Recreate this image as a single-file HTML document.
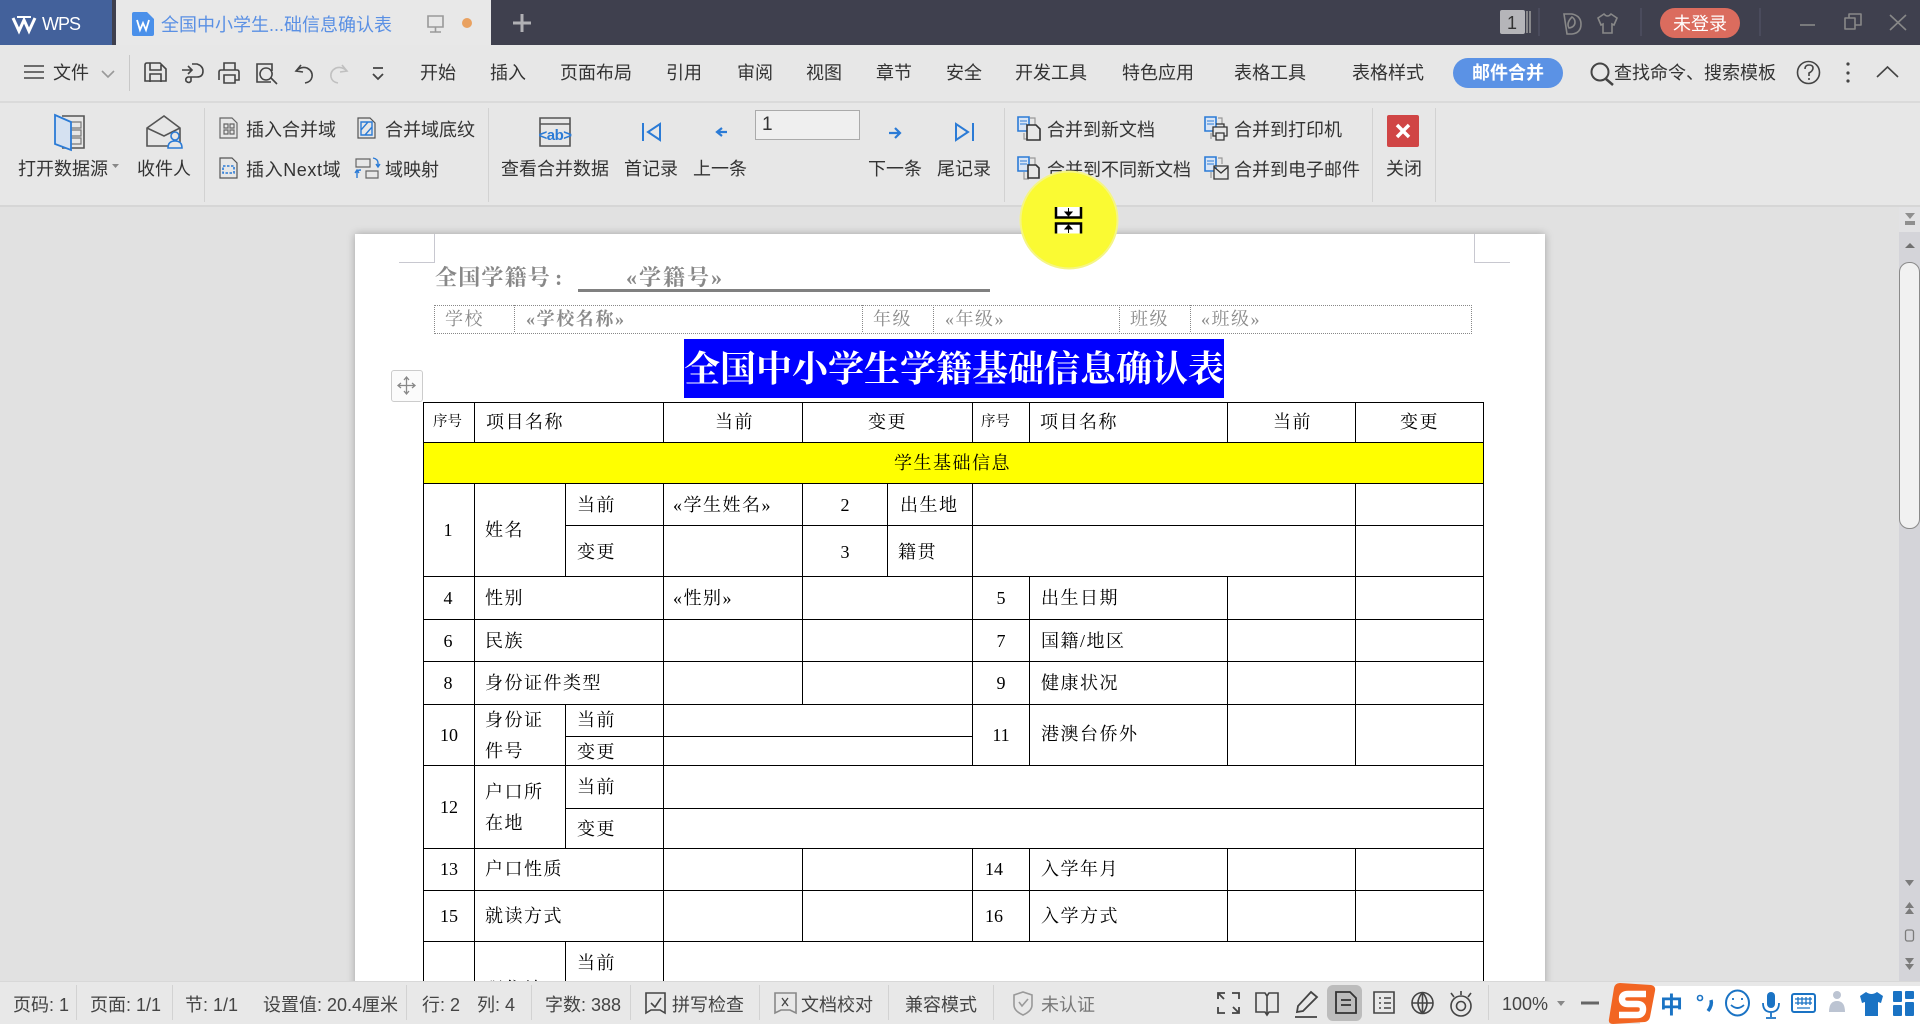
<!DOCTYPE html>
<html lang="zh"><head><meta charset="utf-8"><title>WPS</title>
<style>
html,body{margin:0;padding:0;width:1920px;height:1024px;overflow:hidden;background:#e1e1e1}
#r{position:relative;width:1920px;height:1024px;overflow:hidden;font-family:"Liberation Sans","Noto Sans CJK SC",sans-serif;color:#333}
.b{position:absolute}
.t{position:absolute;white-space:nowrap;line-height:0;height:0;font-size:18px}
.f{font-family:"Liberation Serif","Noto Serif CJK SC",serif;font-size:18px;letter-spacing:1.5px;color:#000;margin-top:1px;margin-left:-1px}
.n{font-family:"Liberation Serif",serif;font-size:18px;color:#000;transform:translateX(-50%)}
.g{font-family:"Liberation Serif","Noto Serif CJK SC",serif;font-size:18px;letter-spacing:1.5px;color:#8a8a8a;margin-top:1px}
.h{position:absolute;height:1px;background:#000}
.v{position:absolute;width:1px;background:#000}
.d{position:absolute;width:0;border-left:1px dotted #888;top:305px;height:27px}
.s{position:absolute;width:1px;background:#d2d2d2}
.st{color:#444;font-size:18px;margin-top:1px}
.k{margin-top:1px}
</style></head><body><div id="r">

<!-- page -->
<div class="b" style="left:355px;top:234px;width:1190px;height:790px;background:#fff;box-shadow:0 0 8px rgba(0,0,0,.28)"></div>
<div class="b" style="left:434px;top:234px;width:1px;height:29px;background:#c8c8d0"></div>
<div class="b" style="left:399px;top:262px;width:36px;height:1px;background:#c8c8d0"></div>
<div class="b" style="left:1474px;top:234px;width:1px;height:29px;background:#c8c8d0"></div>
<div class="b" style="left:1474px;top:262px;width:36px;height:1px;background:#c8c8d0"></div>

<div class="t" style="left:435px;top:278px;font-family:'Liberation Serif','Noto Serif CJK SC',serif;font-size:22px;letter-spacing:1.2px;color:#888;font-weight:700">全国学籍号</div>
<div class="t" style="left:555px;top:278px;font-family:'Liberation Serif',serif;font-size:22px;color:#888;font-weight:700">:</div>
<div class="t" style="left:626px;top:278px;font-family:'Liberation Serif','Noto Serif CJK SC',serif;font-size:22px;letter-spacing:2px;color:#888;font-weight:700">«学籍号»</div>
<div class="b" style="left:578px;top:289px;width:412px;height:3px;background:#808080"></div>

<div class="b" style="left:434px;top:305px;width:1036px;height:27px;border:1px dotted #888"></div>
<div class="d" style="left:514px"></div><div class="d" style="left:862px"></div><div class="d" style="left:933px"></div><div class="d" style="left:1119px"></div><div class="d" style="left:1190px"></div>
<div class="t g" style="left:445px;top:318px">学校</div>
<div class="t g" style="left:526px;top:318px;font-weight:700;letter-spacing:1.600px">«学校名称»</div>
<div class="t g" style="left:873px;top:318px">年级</div>
<div class="t g" style="left:945px;top:318px">«年级»</div>
<div class="t g" style="left:1130px;top:318px">班级</div>
<div class="t g" style="left:1201px;top:318px">«班级»</div>

<div class="b" style="left:684px;top:339px;width:540px;height:59px;background:#00f"></div>
<div class="t" style="left:684px;top:369px;font-family:'Liberation Serif','Noto Serif CJK SC',serif;font-size:36px;font-weight:700;color:#fff">全国中小学生学籍基础信息确认表</div>

<div class="b" style="left:391px;top:370px;width:30px;height:30px;background:#fbfbfb;border:1px solid #ccc;border-radius:3px"></div>

<div class="b" style="left:424px;top:443px;width:1060px;height:40px;background:#ff0"></div>

<!-- table lines -->
<div class="h" style="left:423px;top:402px;width:1061px"></div>
<div class="h" style="left:423px;top:442px;width:1061px"></div>
<div class="h" style="left:423px;top:483px;width:1061px"></div>
<div class="h" style="left:565px;top:525px;width:919px"></div>
<div class="h" style="left:423px;top:576px;width:1061px"></div>
<div class="h" style="left:423px;top:619px;width:1061px"></div>
<div class="h" style="left:423px;top:661px;width:1061px"></div>
<div class="h" style="left:423px;top:704px;width:1061px"></div>
<div class="h" style="left:565px;top:736px;width:408px"></div>
<div class="h" style="left:423px;top:765px;width:1061px"></div>
<div class="h" style="left:565px;top:808px;width:919px"></div>
<div class="h" style="left:423px;top:848px;width:1061px"></div>
<div class="h" style="left:423px;top:890px;width:1061px"></div>
<div class="h" style="left:423px;top:941px;width:1061px"></div>
<div class="v" style="left:423px;top:402px;height:580px"></div>
<div class="v" style="left:1483px;top:402px;height:580px"></div>
<div class="v" style="left:474px;top:402px;height:40px"></div>
<div class="v" style="left:474px;top:483px;height:498px"></div>
<div class="v" style="left:663px;top:402px;height:40px"></div>
<div class="v" style="left:663px;top:483px;height:498px"></div>
<div class="v" style="left:565px;top:483px;height:93px"></div>
<div class="v" style="left:565px;top:704px;height:144px"></div>
<div class="v" style="left:565px;top:941px;height:40px"></div>
<div class="v" style="left:802px;top:402px;height:40px"></div>
<div class="v" style="left:802px;top:483px;height:221px"></div>
<div class="v" style="left:802px;top:848px;height:93px"></div>
<div class="v" style="left:887px;top:483px;height:93px"></div>
<div class="v" style="left:972px;top:402px;height:40px"></div>
<div class="v" style="left:972px;top:483px;height:282px"></div>
<div class="v" style="left:972px;top:848px;height:93px"></div>
<div class="v" style="left:1029px;top:402px;height:40px"></div>
<div class="v" style="left:1029px;top:576px;height:189px"></div>
<div class="v" style="left:1029px;top:848px;height:93px"></div>
<div class="v" style="left:1227px;top:402px;height:40px"></div>
<div class="v" style="left:1227px;top:576px;height:189px"></div>
<div class="v" style="left:1227px;top:848px;height:93px"></div>
<div class="v" style="left:1355px;top:402px;height:40px"></div>
<div class="v" style="left:1355px;top:483px;height:282px"></div>
<div class="v" style="left:1355px;top:848px;height:93px"></div>

<!-- table text -->
<div class="t f" style="left:434px;top:421px;font-size:14.500px;letter-spacing:0">序号</div>
<div class="t f" style="left:487px;top:421px">项目名称</div>
<div class="t f" style="left:716px;top:421px">当前</div>
<div class="t f" style="left:869px;top:421px">变更</div>
<div class="t f" style="left:982px;top:421px;font-size:14.500px;letter-spacing:0">序号</div>
<div class="t f" style="left:1041px;top:421px">项目名称</div>
<div class="t f" style="left:1274px;top:421px">当前</div>
<div class="t f" style="left:1401px;top:421px">变更</div>
<div class="t f" style="left:895px;top:462px">学生基础信息</div>

<div class="t n" style="left:448px;top:530px">1</div>
<div class="t f" style="left:486px;top:529px">姓名</div>
<div class="t f" style="left:578px;top:504px">当前</div>
<div class="t f" style="left:578px;top:551px">变更</div>
<div class="t f" style="left:674px;top:504px">«学生姓名»</div>
<div class="t n" style="left:845px;top:505px">2</div>
<div class="t n" style="left:845px;top:552px">3</div>
<div class="t f" style="left:901px;top:504px">出生地</div>
<div class="t f" style="left:899px;top:551px">籍贯</div>

<div class="t n" style="left:448px;top:598px">4</div>
<div class="t f" style="left:486px;top:597px">性别</div>
<div class="t f" style="left:674px;top:597px">«性别»</div>
<div class="t n" style="left:1001px;top:598px">5</div>
<div class="t f" style="left:1042px;top:597px">出生日期</div>

<div class="t n" style="left:448px;top:641px">6</div>
<div class="t f" style="left:486px;top:640px">民族</div>
<div class="t n" style="left:1001px;top:641px">7</div>
<div class="t f" style="left:1042px;top:640px">国籍/地区</div>

<div class="t n" style="left:448px;top:683px">8</div>
<div class="t f" style="left:486px;top:682px">身份证件类型</div>
<div class="t n" style="left:1001px;top:683px">9</div>
<div class="t f" style="left:1042px;top:682px">健康状况</div>

<div class="t n" style="left:449px;top:735px">10</div>
<div class="t f" style="left:486px;top:719px">身份证</div>
<div class="t f" style="left:486px;top:750px">件号</div>
<div class="t f" style="left:578px;top:719px">当前</div>
<div class="t f" style="left:578px;top:751px">变更</div>
<div class="t n" style="left:1001px;top:735px">11</div>
<div class="t f" style="left:1042px;top:733px">港澳台侨外</div>

<div class="t n" style="left:449px;top:807px">12</div>
<div class="t f" style="left:486px;top:791px">户口所</div>
<div class="t f" style="left:486px;top:822px">在地</div>
<div class="t f" style="left:578px;top:786px">当前</div>
<div class="t f" style="left:578px;top:828px">变更</div>

<div class="t n" style="left:449px;top:869px">13</div>
<div class="t f" style="left:486px;top:868px">户口性质</div>
<div class="t n" style="left:994px;top:869px">14</div>
<div class="t f" style="left:1042px;top:868px">入学年月</div>

<div class="t n" style="left:449px;top:916px">15</div>
<div class="t f" style="left:486px;top:915px">就读方式</div>
<div class="t n" style="left:994px;top:916px">16</div>
<div class="t f" style="left:1042px;top:915px">入学方式</div>

<div class="t f" style="left:578px;top:962px">当前</div>
<div class="t n" style="left:449px;top:990px">17</div>
<div class="t f" style="left:486px;top:988px">现住址</div>

<!-- right scrollbar -->
<div class="b" style="left:1899px;top:207px;width:21px;height:25px;background:#e2e2e4"></div>
<div class="b" style="left:1899px;top:232px;width:21px;height:750px;background:#d4d4d9"></div>
<div class="b" style="left:1899px;top:262px;width:19px;height:265px;background:#f1f1f1;border:1px solid #8a8a8a;border-radius:10px"></div>

<!-- title bar -->
<div class="b" style="left:0;top:0;width:1920px;height:45px;background:#3f404e"></div>
<div class="b" style="left:0;top:0;width:112px;height:45px;background:#43619b"></div>
<div class="b" style="left:116px;top:0;width:375px;height:45px;background:#e8e8e8"></div>
<div class="t" style="left:42px;top:24px;color:#fff;font-size:18px;letter-spacing:-1px">WPS</div>
<div class="t" style="left:161px;top:25px;color:#5a90e4;font-size:18px">全国中小学生...础信息确认表</div>
<div class="b" style="left:462px;top:18px;width:10px;height:10px;border-radius:50%;background:#e9a160"></div>
<div class="b" style="left:1500px;top:10px;width:25px;height:24px;background:#b5b5b9;border-radius:2px"></div>
<div class="t" style="left:1507px;top:23px;font-size:18px;color:#333">1</div>
<div class="b" style="left:1660px;top:8px;width:80px;height:30px;border-radius:15px;background:#db6c5e"></div>
<div class="t" style="left:1673px;top:24px;color:#fff;font-size:18px">未登录</div>

<!-- menu -->
<div class="b" style="left:0;top:45px;width:1920px;height:56px;background:#e7e7e7"></div>
<div class="b" style="left:0;top:101px;width:1920px;height:2px;background:#dadada"></div>
<div class="b" style="left:0;top:103px;width:1920px;height:102px;background:#e7e7e7"></div>
<div class="b" style="left:0;top:205px;width:1920px;height:2px;background:#d6d6d6"></div>
<div class="t" style="left:53px;top:73px">文件</div>
<div class="t" style="left:420px;top:73px">开始</div>
<div class="t" style="left:490px;top:73px">插入</div>
<div class="t" style="left:560px;top:73px">页面布局</div>
<div class="t" style="left:666px;top:73px">引用</div>
<div class="t" style="left:737px;top:73px">审阅</div>
<div class="t" style="left:806px;top:73px">视图</div>
<div class="t" style="left:876px;top:73px">章节</div>
<div class="t" style="left:946px;top:73px">安全</div>
<div class="t" style="left:1015px;top:73px">开发工具</div>
<div class="t" style="left:1122px;top:73px">特色应用</div>
<div class="t" style="left:1234px;top:73px">表格工具</div>
<div class="t" style="left:1352px;top:73px">表格样式</div>
<div class="b" style="left:1453px;top:58px;width:110px;height:30px;border-radius:15px;background:#5b92e5"></div>
<div class="t" style="left:1472px;top:73px;color:#fff;font-weight:700">邮件合并</div>
<div class="t" style="left:1614px;top:73px">查找命令、搜索模板</div>
<div class="s" style="left:129px;top:55px;height:36px;background:#c8c8c8"></div>

<!-- ribbon -->
<div class="s" style="left:204px;top:108px;height:94px"></div>
<div class="s" style="left:488px;top:108px;height:94px"></div>
<div class="s" style="left:1004px;top:108px;height:94px"></div>
<div class="s" style="left:1372px;top:108px;height:94px"></div>
<div class="s" style="left:1435px;top:108px;height:94px"></div>
<div class="t k" style="left:18px;top:168px">打开数据源</div>
<div class="t k" style="left:137px;top:168px">收件人</div>
<div class="t k" style="left:246px;top:129px">插入合并域</div>
<div class="t k" style="left:385px;top:129px">合并域底纹</div>
<div class="t k" style="left:246px;top:169px;letter-spacing:.6px">插入Next域</div>
<div class="t k" style="left:385px;top:169px">域映射</div>
<div class="t k" style="left:501px;top:168px">查看合并数据</div>
<div class="t k" style="left:624px;top:168px">首记录</div>
<div class="t k" style="left:693px;top:168px">上一条</div>
<div class="b" style="left:755px;top:110px;width:103px;height:28px;background:#efefef;border:1px solid #aaa"></div>
<div class="t" style="left:762px;top:125px;font-size:19px">1</div>
<div class="t k" style="left:868px;top:168px">下一条</div>
<div class="t k" style="left:937px;top:168px">尾记录</div>
<div class="t k" style="left:1047px;top:129px">合并到新文档</div>
<div class="t k" style="left:1047px;top:169px">合并到不同新文档</div>
<div class="t k" style="left:1234px;top:129px">合并到打印机</div>
<div class="t k" style="left:1234px;top:169px">合并到电子邮件</div>
<div class="t k" style="left:1386px;top:168px">关闭</div>

<!-- status bar -->
<div class="b" style="left:0;top:981px;width:1920px;height:43px;background:#e8e8e8;border-top:1px solid #d8d8d8;box-sizing:border-box"></div>
<div class="s" style="left:76px;top:985px;height:35px"></div>
<div class="s" style="left:172px;top:985px;height:35px"></div>
<div class="s" style="left:406px;top:985px;height:35px"></div>
<div class="s" style="left:531px;top:985px;height:35px"></div>
<div class="s" style="left:630px;top:985px;height:35px"></div>
<div class="s" style="left:759px;top:985px;height:35px"></div>
<div class="s" style="left:888px;top:985px;height:35px"></div>
<div class="s" style="left:993px;top:985px;height:35px"></div>
<div class="s" style="left:1488px;top:985px;height:35px"></div>
<div class="t st" style="left:13px;top:1004px">页码: 1</div>
<div class="t st" style="left:90px;top:1004px">页面: 1/1</div>
<div class="t st" style="left:185px;top:1004px">节: 1/1</div>
<div class="t st" style="left:263px;top:1004px">设置值: 20.4厘米</div>
<div class="t st" style="left:422px;top:1004px">行: 2</div>
<div class="t st" style="left:477px;top:1004px">列: 4</div>
<div class="t st" style="left:545px;top:1004px">字数: 388</div>
<div class="t st" style="left:672px;top:1004px">拼写检查</div>
<div class="t st" style="left:801px;top:1004px">文档校对</div>
<div class="t st" style="left:905px;top:1004px">兼容模式</div>
<div class="t st" style="left:1041px;top:1004px;color:#777">未认证</div>
<div class="b" style="left:1327px;top:985px;width:35px;height:36px;background:#bcbcbc;border-radius:6px"></div>
<div class="t st" style="left:1502px;top:1003px">100%</div>
<div class="b" style="left:1640px;top:986px;width:280px;height:38px;background:#fff"></div>
<div class="t" style="left:1660px;top:1005px;color:#1a73c4;font-size:23px;font-weight:700">中</div>

<!-- icons -->
<svg class="b" style="left:0;top:0" width="1920" height="1024" viewBox="0 0 1920 1024" fill="none" stroke="#444" stroke-width="1.6">
<!-- WPS logo -->
<path d="M13 18 L19 31 L24 20 L29 31 L35 18" stroke="#fff" stroke-width="3"/>
<path d="M17 17 H31" stroke="#fff" stroke-width="2"/>
<!-- doc icon -->
<path d="M132 14 q0-2 2-2 H147 L154 19 V34 q0 2-2 2 H134 q-2 0-2-2 Z" fill="#4a90ea" stroke="none"/>
<path d="M137 20 L140 30 L143 23 L146 30 L149 20" stroke="#fff" stroke-width="1.8"/>
<!-- monitor -->
<path d="M428 16 H443 V27 H428 Z M435.5 27 V32 M430 32 H441" stroke="#999"/>
<!-- plus -->
<path d="M522 14 V32 M513 23 H531" stroke="#b0b0b4" stroke-width="3"/>
<!-- title right -->
<path d="M1527 11 V33 M1530 11 V33" stroke="#999"/>
<path d="M1539 8 V36 M1641 8 V36 M1760 8 V36" stroke="#55566a" stroke-width="1"/>
<path d="M1564 14 H1572 q9 2 9 10 q0 9 -9 10 H1567 Z M1572 17 q-6 6 -3 11 q6 -1 6 -6 q0 -3 -3 -5 Z" stroke="#888"/>
<path d="M1604 14 L1598 18 L1601 25 L1603 24 V33 H1612 V24 L1614 25 L1617 18 L1611 14 q-3.500 4 -7 0 Z" stroke="#888"/>
<path d="M1800 25 H1815" stroke="#888"/>
<path d="M1845 18 H1855 V29 H1845 Z M1849 18 V14 H1861 V25 H1855" stroke="#888" stroke-linejoin="round"/>
<path d="M1890 15 L1906 30 M1906 15 L1890 30" stroke="#888"/>
<!-- menu -->
<path d="M24 66 H44 M24 72 H44 M24 78 H44"/>
<path d="M102 71 L108 77 L114 71" stroke="#999"/>
<path d="M145 65 q0-2 2-2 H160 L166 69 V81 H145 Z M150 63 V70 H161 V65 M150 82 V74 H161 V82"/>
<path d="M182 70 H192 M188 66 L192 70 L188 74 M192 64 H197 q6 2 6 7 q0 6 -6 6 h-6 V81 q-2 3 -5 0 q-1 -3 2 -4 h3"/>
<path d="M224 70 V63 H235 V70 M219 80 V72 q0-2 2-2 H237 q2 0 2 2 V80 H235 M224 75 H235 V83 H224 Z"/>
<path d="M271 82 H257 V64 H272 V71 M266 68 a6 6 0 1 0 .1 0 Z M271 78 L277 84"/>
<path d="M301 65 L296 71 L303 72 M296 71 q5-5 11-3 q6 3 5 9 q-1 5 -7 6"/>
<path d="M342 65 L347 71 L340 72 M347 71 q-5-5 -11-3 q-6 3 -5 9 q1 5 7 6" stroke="#c0c0c0"/>
<path d="M373 68 H383 M373 74 L378 79 L383 74" stroke-width="1.8"/>
<circle cx="1600" cy="72" r="8.500" stroke-width="2"/><path d="M1606 79 L1613 85" stroke-width="2.500"/>
<circle cx="1808.500" cy="72.500" r="11"/>
<path d="M1805 69 q0-4 4-4 q4 0 4 3 q0 3 -4 5 V76 M1809 78 V80"/>
<circle cx="1848" cy="64" r="1.600" fill="#444" stroke="none"/><circle cx="1848" cy="73" r="1.600" fill="#444" stroke="none"/><circle cx="1848" cy="81" r="1.600" fill="#444" stroke="none"/>
<path d="M1877 77 L1887.500 67 L1898 77"/>
<!-- ribbon large -->
<path d="M62 116 H84 V148 H62" stroke="#555"/>
<path d="M68 122 H81 V128 H68 Z M68 130 H81 V136 H68 Z M68 138 H81 V144 H68 Z" stroke="#777" stroke-width="1.200"/>
<path d="M55 115 L71 122 V150 L55 144 Z" fill="#d5e1f1" stroke="#2b7bd6" stroke-width="1.800"/>
<path d="M147 128 L164 116 L180 128 V146 H147 Z M147 128 L164 136 L180 128" stroke="#555"/>
<circle cx="175" cy="136" r="4" fill="#e7e7e7" stroke="#2b7bd6"/>
<path d="M168 148 q0-7 7-7 q7 0 7 7 Z" fill="#e7e7e7" stroke="#2b7bd6"/>
<path d="M112 164 H119 L115.500 168 Z" fill="#888" stroke="none"/>
<!-- small docs -->
<path d="M220 118 H232 L237 123 V138 H220 Z M224 124 H228 V128 H224 Z M230 124 H234 V128 H230 Z M224 130 H228 V134 H224 Z M230 130 H234 V134 H230 Z" stroke="#666" stroke-width="1.200"/>
<path d="M358 118 H370 L375 123 V138 H358 Z" stroke="#555" stroke-width="1.200"/>
<path d="M361 122 H372 V135 H361 Z M361 130 L368 122 M365 135 L372 127" stroke="#2b7bd6" stroke-width="1.400"/>
<path d="M220 158 H232 L237 163 V178 H220 Z" stroke="#555" stroke-width="1.200"/>
<path d="M223 166 H234 V173 H223 Z" stroke="#2b7bd6" stroke-dasharray="2.500 1.500"/>
<path d="M356 159 H370 V167 H356 Z M366 171 H378 V178 H366 Z" stroke="#666" stroke-width="1.200"/>
<path d="M373 158 q5 1 5 5 V167 M376 164 L378 167 L380 164 M357 178 V172 q0-2 4-2 M355 173 L357 170 L359 173" stroke="#2b7bd6" stroke-width="1.400"/>
<!-- ab -->
<path d="M540 118 H570 V146 H540 Z M540 124 H570" stroke="#555"/>
<text x="555" y="140" font-family="Liberation Sans,sans-serif" font-size="15" font-weight="700" letter-spacing="-.5" fill="#2b7bd6" stroke="none" text-anchor="middle">&lt;ab&gt;</text>
<!-- nav -->
<path d="M643 123 V141" stroke="#2b7bd6" stroke-width="2"/>
<path d="M660 124 V140 L648 132 Z" stroke="#2b7bd6" stroke-width="2"/>
<path d="M722 128 L717 132 L722 136 M717 132 H727" stroke="#2b7bd6" stroke-width="2.200"/>
<path d="M895 128 L900 133 L895 138 M889 133 H900" stroke="#2b7bd6" stroke-width="2.200"/>
<path d="M973 123 V141" stroke="#2b7bd6" stroke-width="2"/>
<path d="M956 124 V140 L968 132 Z" stroke="#2b7bd6" stroke-width="2"/>
<!-- merge -->
<path d="M1018 117 H1029 V131 H1018 Z" fill="#d9e5f5" stroke="#2b7bd6"/><path d="M1020 121 H1027 M1020 124 H1027" stroke="#2b7bd6" stroke-width="1"/>
<path d="M1030 118 H1035 V125 M1024 133 V139 H1029" stroke="#999" stroke-width="1.200"/>
<path d="M1027 125 H1036 L1040 129 V140 H1027 Z" fill="#e7e7e7" stroke="#333"/>
<path d="M1018 157 H1029 V171 H1018 Z" fill="#d9e5f5" stroke="#2b7bd6"/><path d="M1020 161 H1027 M1020 164 H1027" stroke="#2b7bd6" stroke-width="1"/>
<path d="M1030 158 H1035 V165 M1024 172 V179 H1029" stroke="#999" stroke-width="1.200"/>
<path d="M1028 165 H1036 L1039 168 V178 H1028 Z" fill="#e7e7e7" stroke="#333"/>
<path d="M1205 117 H1216 V131 H1205 Z" fill="#d9e5f5" stroke="#2b7bd6"/><path d="M1207 121 H1214 M1207 124 H1214" stroke="#2b7bd6" stroke-width="1"/>
<path d="M1218 118 H1222 V124 M1211 133 V139" stroke="#999" stroke-width="1.200"/>
<path d="M1213 127 H1227 V136 H1224 V133 H1216 V136 H1213 Z M1216 124 H1224 V127 M1216 133 H1224 V140 H1216 Z" fill="#e7e7e7" stroke="#333" stroke-width="1.300"/>
<path d="M1205 157 H1216 V171 H1205 Z" fill="#d9e5f5" stroke="#2b7bd6"/><path d="M1207 161 H1214 M1207 164 H1214" stroke="#2b7bd6" stroke-width="1"/>
<path d="M1218 158 H1222 V164 M1211 172 V178" stroke="#999" stroke-width="1.200"/>
<path d="M1214 166 H1228 V179 H1214 Z M1214 167 L1221 173 L1228 167" fill="#e7e7e7" stroke="#333" stroke-width="1.300"/>
<!-- close -->
<rect x="1387" y="115" width="32" height="32" rx="2" fill="#d04545" stroke="none"/>
<path d="M1397 125 L1409 137 M1409 125 L1397 137" stroke="#fff" stroke-width="3.500"/>
<!-- move handle -->
<path d="M406.500 377 V394 M398 385.500 H415 M404 380 L406.500 377 L409 380 M404 391 L406.500 394 L409 391 M401 383 L398 385.500 L401 388 M412 383 L415 385.500 L412 388" stroke="#888" stroke-width="1.300"/>
<!-- scrollbar -->
<path d="M1905 213 H1915 L1910 219 Z M1905 221 H1915 V225 H1905 Z" fill="#8f8f8f" stroke="none"/>
<path d="M1905 248 L1910 243 L1915 248 Z" fill="#707070" stroke="none"/>
<path d="M1905 880 H1914 L1909.500 886 Z M1905 908 L1909.500 902 L1914 908 Z M1905 914 L1909.500 908 L1914 914 Z M1905 958 H1914 L1909.500 964 Z M1905 964 H1914 L1909.500 970 Z" fill="#7c7c7c" stroke="none"/>
<rect x="1905.500" y="930" width="8" height="11" rx="2" stroke="#7c7c7c" stroke-width="1.300"/>
<!-- status icons -->
<path d="M646 993 H665 V1013 L660 1010 H651 L646 1013 Z M651 1003 L655 1007 L661 998"/>
<path d="M775 993 H796 V1013 L790 1010 H781 L775 1013 Z" stroke="#888"/>
<path d="M782 998 L788 1006 M788 998 L782 1006" stroke-width="1.300"/>
<path d="M1014 995 L1023 992 L1032 995 V1005 q0 6 -9 10 q-9 -4 -9 -10 Z M1019 1002 L1022 1006 L1028 999" stroke="#999"/>
<path d="M1218 999 V993 H1225 M1232 993 H1239 V999 M1239 1007 V1013 H1232 M1225 1013 H1218 V1007 M1224 999 L1219 994 M1233 1007 L1238 1012" stroke-width="1.800"/>
<path d="M1256 993 H1265 L1267 996 L1269 993 H1278 V1012 H1269 L1267 1015 L1265 1012 H1256 Z M1267 996 V1014"/>
<path d="M1311 992 L1317 997 L1303 1011 L1297 1012 L1298 1006 Z M1295 1017 H1317" stroke-width="1.800"/>
<path d="M1336 992 H1350 L1356 998 V1013 H1336 Z M1341 1000 H1351 M1341 1005 H1351" fill="#bcbcbc" stroke="#333" stroke-width="1.800"/>
<path d="M1374 992 H1394 V1013 H1374 Z M1379 998 H1381 M1384 998 H1391 M1379 1003 H1381 M1384 1003 H1391 M1379 1008 H1381 M1384 1008 H1391"/>
<circle cx="1422.500" cy="1003" r="10.500"/>
<path d="M1412 1003 H1433 M1422.500 992.500 V1013.500 M1422.500 992.500 q-9 10.500 0 21 M1422.500 992.500 q9 10.500 0 21"/>
<circle cx="1461" cy="1006" r="10"/><circle cx="1461" cy="1006" r="4.500"/>
<path d="M1461 991 V995 M1451 993 L1454 997 M1471 993 L1468 997"/>
<path d="M1557 1001 H1565 L1561 1006 Z" fill="#888" stroke="none"/>
<path d="M1581 1003 H1599" stroke="#666" stroke-width="3"/>
<!-- sogou -->
<path d="M1620 983 L1651 985 q5 1 4 6 L1650 1017 q-1 4 -5 5 L1613 1024 q-5 0 -4 -5 L1614 988 q1 -5 6 -5 Z" fill="#f26522" stroke="none"/>
<path d="M1646 994 H1628 q-6 0 -6 5 q0 5 6 5 H1637 q6 0 6 5 q0 6 -6 6 H1619" stroke="#fff" stroke-width="6.500"/>
<circle cx="1700" cy="998" r="2.500" stroke="#1a73c4"/>
<path d="M1711 1000 q1.500 5 -3 11" stroke="#1a73c4" stroke-width="3.500"/>
<ellipse cx="1737.500" cy="1003" rx="11.500" ry="12.500" stroke="#1a73c4" stroke-width="2"/>
<path d="M1731 1005 q6.500 6 13 0 M1733 998 v2 M1742 998 v2" stroke="#1a73c4" stroke-width="1.800"/>
<rect x="1767" y="992" width="8" height="16" rx="4" fill="#1a73c4" stroke="none"/>
<path d="M1763 1003 q0 9 8 9 q8 0 8 -9 M1771 1012 V1017 M1766 1018 H1776" stroke="#1a73c4" stroke-width="1.800"/>
<rect x="1792" y="994" width="23" height="18" rx="2" stroke="#1a73c4" stroke-width="2"/>
<path d="M1795 999 H1812 M1795 1003 H1812 M1797 1008 H1810 M1798 997 V1005 M1802 997 V1005 M1806 997 V1005 M1810 997 V1005" stroke="#1a73c4" stroke-width="1.300"/>
<circle cx="1837" cy="995" r="4" fill="#bcc4d2" stroke="none"/>
<path d="M1829 1012 q0 -11 8 -11 q8 0 8 11 Z" fill="#bcc4d2" stroke="none"/>
<path d="M1866 992 L1860 996 L1862 1003 L1865 1002 V1016 H1878 V1002 L1881 1003 L1883 996 L1877 992 q-5.500 4 -11 0 Z" fill="#1a73c4" stroke="none"/>
<rect x="1893" y="991" width="9" height="11" rx="1" fill="#1a73c4" stroke="none"/><rect x="1905" y="991" width="9" height="8" rx="1" fill="#1a73c4" stroke="none"/>
<rect x="1893" y="1005" width="9" height="11" rx="1" fill="#1a73c4" stroke="none"/><rect x="1905" y="1002" width="9" height="14" rx="1" fill="#1a73c4" stroke="none"/>
<!-- yellow highlight & cursor -->
<circle cx="1069" cy="220" r="48.500" fill="#fafa33" stroke="#f5f585" stroke-width="2"/>
<path d="M1056 207 V217.500 H1081 V207 M1056 233.500 V223.500 H1081 V233.500" fill="#fff" stroke="#000" stroke-width="2.500"/>
<path d="M1068.500 208 V212 M1065 212 H1072 L1068.500 216 Z M1068.500 233 V229 M1065 229 H1072 L1068.500 225 Z" fill="#000" stroke="#000" stroke-width="1"/>
</svg>
</div></body></html>
